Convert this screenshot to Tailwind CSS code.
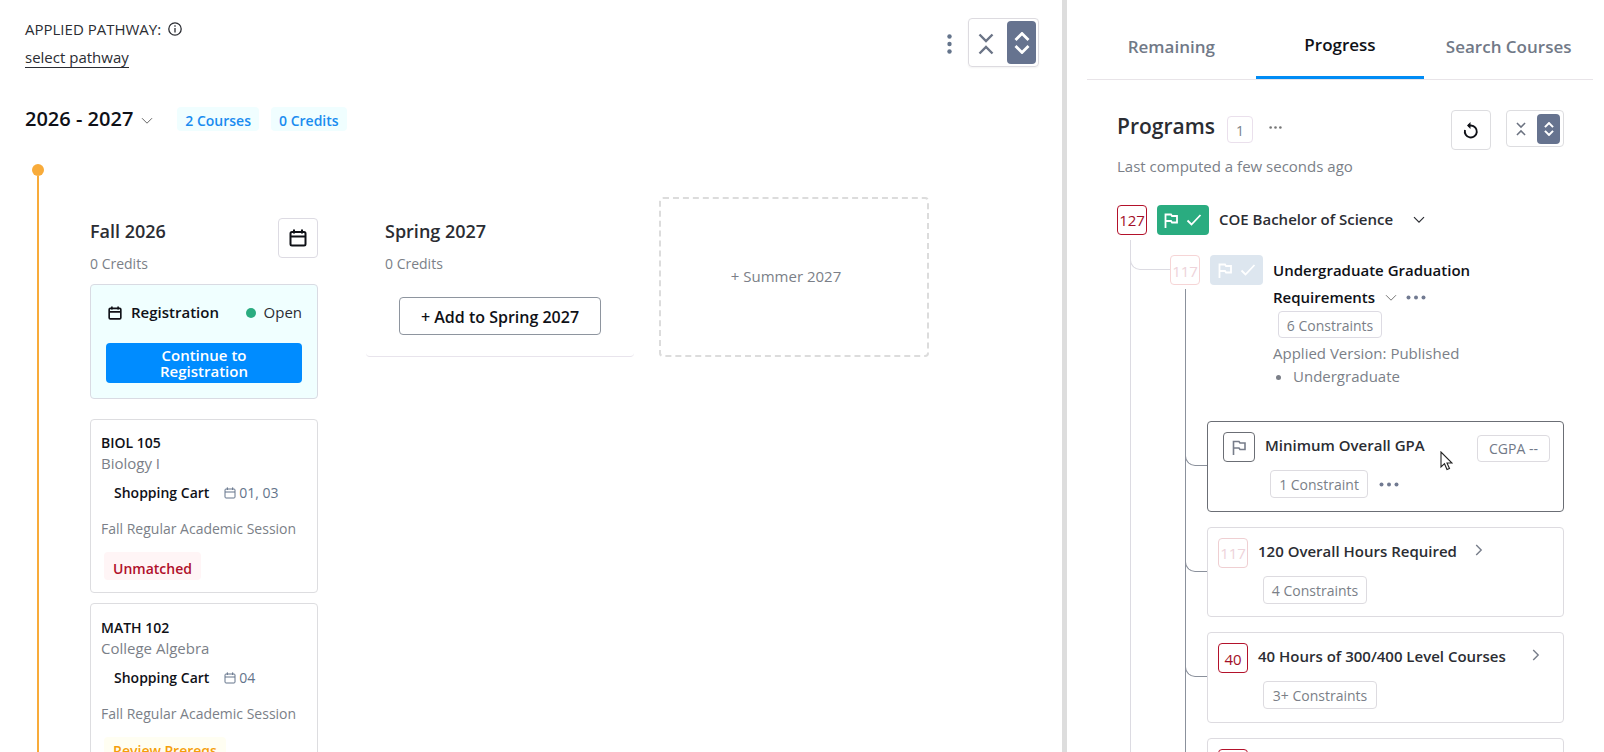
<!DOCTYPE html>
<html lang="en">
<head>
    <meta charset="UTF-8" />
    <meta name="viewport" content="width=device-width, initial-scale=1" />
    <title>Degree Planner</title>
    <script src="https://cdn.jsdelivr.net/npm/@tailwindcss/browser@4"></script>
</head>
<body class="bg-white text-[#2b2d33] text-[15px] font-['Segoe_UI','Open_Sans',sans-serif]">
<!-- shared icons -->
<svg class="hidden" aria-hidden="true">
    <symbol id="calendar" viewBox="0 0 18 18" fill="none" stroke="currentColor">
        <rect x="1.5" y="3" width="15" height="13.5" rx="1.5" />
        <path d="M1.5 7.5h15M5 0.5v4M13 0.5v4" />
    </symbol>
    <symbol id="chevron-down" viewBox="0 0 12 8" fill="none" stroke="currentColor">
        <path d="M1 1.2l5 5 5-5" />
    </symbol>
    <symbol id="chevron-right" viewBox="0 0 8 12" fill="none" stroke="currentColor">
        <path d="M1.2 1l5 5-5 5" />
    </symbol>
    <symbol id="collapse" viewBox="0 0 16 22" fill="none" stroke="currentColor">
        <path d="M1.5 1.5L8 8l6.5-6.5M1.5 20.5L8 14l6.5 6.5" />
    </symbol>
    <symbol id="expand" viewBox="0 0 16 22" fill="none" stroke="currentColor">
        <path d="M1.5 8L8 1.5 14.5 8M1.5 14L8 20.5l6.5-6.5" />
    </symbol>
    <symbol id="flag" viewBox="0 0 14 15" fill="none" stroke="currentColor">
        <path d="M1.5 15V1.5h5.5l1 1.5h5v6.5H8L7 8H1.5" />
    </symbol>
    <symbol id="check" viewBox="0 0 16 12" fill="none" stroke="currentColor">
        <path d="M1.5 6.5l4 4 9-9.5" />
    </symbol>
    <symbol id="dots" viewBox="0 0 20 5" fill="currentColor">
        <circle cx="2.5" cy="2.5" r="2" /><circle cx="10" cy="2.5" r="2" /><circle cx="17.5" cy="2.5" r="2" />
    </symbol>
</svg>

<div class="flex h-screen overflow-hidden">
    <!-- Planner -->
    <main class="flex-1 min-w-0 flex flex-col">
        <header class="flex justify-between items-start pl-[25px] pr-[23px] pt-[15px]">
            <div>
                <div class="flex items-center gap-[7px] h-7">
                    <span>APPLIED PATHWAY:</span>
                    <svg class="size-[14px]" viewBox="0 0 14 14" fill="none" stroke="currentColor" stroke-width="1.3"><circle cx="7" cy="7" r="6.2" /><path d="M7 6v4.5M7 3.2v1.5" /></svg>
                </div>
                <a href="#" class="inline-block h-[25px] leading-[28px] border-b border-[#2b2d33]">select pathway</a>
            </div>
            <div class="flex items-center gap-4 pt-[3px]">
                <button type="button" aria-label="More options" class="pt-[2px] text-[#64748b]">
                    <svg class="w-[5px] h-5" viewBox="0 0 5 20" fill="currentColor"><circle cx="2.5" cy="2.5" r="2.2" /><circle cx="2.5" cy="10" r="2.2" /><circle cx="2.5" cy="17.5" r="2.2" /></svg>
                </button>
                <div class="flex items-start justify-between w-[71px] h-[49px] pt-[2px] pl-[9px] pr-[2px] border border-[#dddbe0] rounded-sm shadow-xs">
                    <button type="button" aria-label="Collapse all" class="h-[45px] text-[#6b7486]"><svg class="w-4 h-[22px]" stroke-width="2.4"><use href="#collapse" /></svg></button>
                    <button type="button" aria-label="Expand all" class="flex items-center justify-center w-[29px] h-[43px] pt-px rounded-sm bg-[#66738f] text-white"><svg class="w-4 h-[22px]" stroke-width="2.8"><use href="#expand" /></svg></button>
                </div>
            </div>
        </header>

        <div class="flex items-center h-7 mt-9 pl-[25px]">
            <h2 class="text-[20px] font-semibold text-[#0f1117]">2026 - 2027</h2>
            <button type="button" aria-label="Toggle year" class="ml-2 mr-6 pt-1 text-[#666]"><svg class="w-3 h-2"><use href="#chevron-down" /></svg></button>
            <span class="h-6 leading-[27px] px-2 mr-3 rounded-sm bg-[#f0feff] text-[14px] font-semibold text-[#1a8cf0]">2 Courses</span>
            <span class="h-6 leading-[27px] px-2 rounded-sm bg-[#f0feff] text-[14px] font-semibold text-[#1a8cf0]">0 Credits</span>
        </div>

        <div class="flex flex-1 min-h-0 mt-[31px] pl-8">
            <div class="flex flex-col items-center w-3">
                <div class="size-3 shrink-0 rounded-full bg-[#f8ab3a]"></div>
                <div class="w-[2px] flex-1 bg-[#f8ab3a]"></div>
            </div>

            <div class="flex items-start pt-[33px] pl-[46px]">
                <!-- Fall -->
                <section class="w-[228px] pt-5 mr-12">
                    <div class="flex justify-between items-start mb-[10px]">
                        <div>
                            <h3 class="text-[18px] leading-[28px] font-semibold">Fall 2026</h3>
                            <p class="mt-[9px] text-[14px] leading-[20px] text-[#7b7f88]">0 Credits</p>
                        </div>
                        <button type="button" aria-label="Fall 2026 calendar" class="flex items-center justify-center size-10 mt-px border border-[#dddbe3] rounded-sm text-[#0f1117]"><svg class="size-[18px]" stroke-width="2"><use href="#calendar" /></svg></button>
                    </div>

                    <div class="px-[15px] pt-[18px] pb-[15px] border border-[#d9dbe3] rounded-sm bg-[#f0ffff]">
                        <div class="flex items-center h-5">
                            <svg class="size-[14px] ml-[2px] mr-[9px] text-[#0f1117]" stroke-width="2.1"><use href="#calendar" /></svg>
                            <span class="font-semibold text-[#0f1117]">Registration</span>
                            <span class="size-[10px] ml-auto mr-2 rounded-full bg-[#2aac80]"></span>
                            <span>Open</span>
                        </div>
                        <button type="button" class="w-full h-10 mt-5 px-10 rounded-sm bg-[#008cff] text-white leading-[16px] font-semibold">Continue to Registration</button>
                    </div>

                    <article class="mt-5 px-[10px] pt-[13px] pb-3 border border-[#dddde0] rounded-sm">
                        <h4 class="text-[14px] leading-[20px] font-semibold text-[#0f1117]">BIOL 105</h4>
                        <p class="leading-[20px] text-[#7b7f88]">Biology I</p>
                        <div class="flex items-center h-6 mt-2 pl-[13px]">
                            <span class="text-[14px] font-semibold text-[#0f1117]">Shopping Cart</span>
                            <svg class="size-3 ml-[15px] mr-[3px] text-[#64748b]" stroke-width="1.5"><use href="#calendar" /></svg>
                            <span class="text-[14px] text-[#64748b]">01, 03</span>
                        </div>
                        <p class="mt-[13px] leading-[22px] text-[14px] whitespace-nowrap text-[#7b7f88]">Fall Regular Academic Session</p>
                        <span class="inline-block align-top mt-3 ml-[3px] px-[9px] h-7 leading-[34px] rounded-sm bg-[#fff5f6] text-[14px] font-semibold text-[#b00f2a]">Unmatched</span>
                    </article>

                    <article class="mt-[10px] px-[10px] pt-[14px] pb-3 border border-[#dddde0] rounded-sm">
                        <h4 class="text-[14px] leading-[20px] font-semibold text-[#0f1117]">MATH 102</h4>
                        <p class="leading-[20px] text-[#7b7f88]">College Algebra</p>
                        <div class="flex items-center h-6 mt-2 pl-[13px]">
                            <span class="text-[14px] font-semibold text-[#0f1117]">Shopping Cart</span>
                            <svg class="size-3 ml-[15px] mr-[3px] text-[#64748b]" stroke-width="1.5"><use href="#calendar" /></svg>
                            <span class="text-[14px] text-[#64748b]">04</span>
                        </div>
                        <p class="mt-[13px] leading-[22px] text-[14px] whitespace-nowrap text-[#7b7f88]">Fall Regular Academic Session</p>
                        <span class="inline-block align-top mt-3 ml-[3px] px-[9px] h-7 leading-[28px] rounded-sm bg-[#fffef2] text-[14px] font-semibold text-[#f59e0b]">Review Prereqs</span>
                    </article>
                </section>

                <!-- Spring -->
                <section class="w-[268px] h-40 pt-5 px-[19px] mr-[25px] border-b border-[#e8e4ec] rounded-b-sm">
                    <h3 class="text-[18px] leading-[28px] font-semibold">Spring 2027</h3>
                    <p class="mt-[9px] text-[14px] leading-[20px] text-[#7b7f88]">0 Credits</p>
                    <button type="button" class="w-[202px] h-[38px] mt-[23px] ml-[14px] pt-[2px] border border-[#8e959f] rounded-sm text-[16px] font-semibold text-[#0f1117]">+ Add to Spring 2027</button>
                </section>

                <!-- Summer -->
                <button type="button" class="w-[270px] h-40 pr-4 border-2 border-dashed border-[#dcdcdc] rounded-sm text-[#7b7f88]">+ Summer 2027</button>
            </div>
        </div>
    </main>

    <!-- Progress panel -->
    <aside class="w-[542px] shrink-0 border-l-[5px] border-[#dddddd]">
        <nav class="grid grid-cols-3 h-20 ml-5 mr-[11px] border-b border-[#e8e4e8] text-[17px] font-semibold whitespace-nowrap text-[#717987]">
            <button type="button" class="pt-[14px]">Remaining</button>
            <button type="button" class="pt-[14px] border-b-3 border-[#008cf5] text-[#0f1117]">Progress</button>
            <button type="button" class="pt-[14px]">Search Courses</button>
        </nav>

        <div class="pl-[50px] pr-10 pt-[30px]">
            <div class="flex items-start">
                <h2 class="text-[21px] leading-[32px] font-semibold">Programs</h2>
                <span class="w-[26px] h-[27px] leading-[28px] mt-[6px] ml-3 border border-[#eae0ec] rounded-sm text-center text-[14px] text-[#7b7f88]">1</span>
                <button type="button" aria-label="Program options" class="mt-2 ml-4 text-[#777]"><svg class="w-[13px] h-[19px]" viewBox="0 0 20 5"><use href="#dots" /></svg></button>
                <button type="button" aria-label="Recompute" class="flex items-center justify-center size-10 ml-auto border border-[#dddde0] rounded-sm text-[#0f1117]">
                    <svg class="w-4 h-[17px]" viewBox="0 0 16 17" fill="none" stroke="currentColor" stroke-width="1.9"><path d="M2 8a6 6 0 1 0 6-4.500H5" /><path d="M7.5 0L4 3.5 7.5 7z" fill="currentColor" stroke="none" /></svg>
                </button>
                <div class="flex items-center justify-between w-[58px] h-[37px] ml-[15px] pl-[9px] pr-[3px] border border-[#dddde0] rounded-sm">
                    <button type="button" aria-label="Collapse programs" class="text-[#6b7280]"><svg class="w-[10px] h-[14px]" stroke-width="2.4"><use href="#collapse" /></svg></button>
                    <button type="button" aria-label="Expand programs" class="flex items-center justify-center w-[23px] h-[30px] rounded-sm bg-[#66738f] text-white"><svg class="w-[10px] h-[14px]" stroke-width="3.2"><use href="#expand" /></svg></button>
                </div>
            </div>
            <p class="mt-[5px] leading-[22px] text-[#7b7f88]">Last computed a few seconds ago</p>

            <div class="flex items-center mt-7 h-[30px]">
                <span class="size-[30px] leading-[29px] border border-[#b3122b] rounded-sm text-center text-[#a30f28]">127</span>
                <span class="flex items-center justify-center gap-2 w-[52px] h-[30px] ml-[10px] rounded-sm bg-[#2aac80] text-white">
                    <svg class="w-[14px] h-[15px]" stroke-width="1.8"><use href="#flag" /></svg>
                    <svg class="w-4 h-3" stroke-width="1.8"><use href="#check" /></svg>
                </span>
                <span class="ml-[10px] leading-[28px] pb-[2px] font-semibold">COE Bachelor of Science</span>
                <button type="button" aria-label="Toggle program" class="ml-5"><svg class="w-3 h-2" stroke-width="1.2"><use href="#chevron-down" /></svg></button>
            </div>

            <!-- level 1 -->
            <div class="mt-[5px] ml-[13px] pl-[39px] pt-[15px] border-l border-[#dcdbe2] relative">
                <span class="absolute -left-px top-0 w-10 h-[30px] border-l border-b border-[#dcdbe2] rounded-bl-[10px]"></span>
                <div class="flex items-start">
                    <span class="size-[30px] leading-[31px] border border-[#f6d5d6] rounded-sm text-center text-[#eed3da]">117</span>
                    <span class="flex items-center justify-center gap-2 w-[53px] h-[30px] ml-[10px] rounded-sm bg-[#dde6ef] text-white">
                        <svg class="w-[14px] h-[15px]" stroke-width="1.8"><use href="#flag" /></svg>
                        <svg class="w-4 h-3" stroke-width="1.8"><use href="#check" /></svg>
                    </span>
                    <div class="ml-[10px] pt-[2px] text-[#7b7f88]">
                        <div class="w-[220px] leading-[27px] font-semibold text-[#0f1117]">
                            Undergraduate Graduation<br />
                            <span class="flex items-center">Requirements
                                <button type="button" aria-label="Toggle requirements" class="ml-[10px] text-[#777]"><svg class="w-3 h-2"><use href="#chevron-down" /></svg></button>
                                <button type="button" aria-label="Requirement options" class="ml-[9px] text-[#717a91]"><svg class="w-5 h-[5px]"><use href="#dots" /></svg></button>
                            </span>
                        </div>
                        <span class="block w-[104px] h-[27px] leading-[27px] ml-[5px] border border-[#dddbe3] rounded-sm text-center text-[14px]">6 Constraints</span>
                        <p class="mt-1 leading-[23px]">Applied Version: Published</p>
                        <ul class="leading-[23px] list-disc pl-5">
                            <li>Undergraduate</li>
                        </ul>
                    </div>
                </div>
            </div>

            <!-- level 2 -->
            <div class="ml-[13px] -mt-[99px] border-l border-[#dcdbe2]">
                <div class="ml-[54px] border-l border-[#8b919c] pt-[132px] pl-[21px] pb-10 flex flex-col gap-[15px]">
                    <article class="relative h-[91px] pt-[10px] pl-[15px] pr-[13px] border border-[#6b6e75] rounded-sm">
                        <span class="absolute -left-[23px] top-[30px] w-[22px] h-[14px] border-l border-b border-[#8b919c] rounded-bl-[10px]"></span>
                        <div class="flex items-start">
                            <span class="flex items-center justify-center w-8 h-[30px] border border-[#6b6e75] rounded-sm text-[#777d8a]"><svg class="w-[14px] h-[15px]" stroke-width="1.6"><use href="#flag" /></svg></span>
                            <h4 class="ml-[10px] leading-[26px] font-semibold">Minimum Overall GPA</h4>
                            <span class="w-[73px] h-[27px] leading-[26px] mt-[3px] ml-auto border border-[#dddbe0] rounded-sm text-center text-[14px] text-[#717987]">CGPA --</span>
                        </div>
                        <div class="flex items-center mt-2 ml-[47px] gap-[11px]">
                            <span class="w-[98px] h-7 leading-[27px] border border-[#dddbe0] rounded-sm text-center text-[14px] text-[#7b7f88]">1 Constraint</span>
                            <button type="button" aria-label="Constraint options" class="text-[#717a91]"><svg class="w-5 h-[5px]"><use href="#dots" /></svg></button>
                        </div>
                        <!-- pointer -->
                        <svg class="absolute left-[232px] top-[29px] w-[13px] h-[20px]" viewBox="0 0 13 20" fill="white" stroke="#222" stroke-width="1.1"><path d="M1 1v15l3.5-3.3L7 18.5l2.5-1-2.5-5.5h5z" /></svg>
                    </article>

                    <article class="relative h-[90px] pt-[10px] px-[10px] border border-[#dddbe0] rounded-sm">
                        <span class="absolute -left-[23px] top-[30px] w-[22px] h-[14px] border-l border-b border-[#8b919c] rounded-bl-[10px]"></span>
                        <div class="flex items-start">
                            <span class="size-[30px] leading-[29px] border border-[#efcfd2] rounded-sm text-center text-[#eed3da]">117</span>
                            <h4 class="ml-[10px] leading-[26px] font-semibold">120 Overall Hours Required</h4>
                            <button type="button" aria-label="Expand requirement" class="mt-[6px] ml-[18px] text-[#777d8a]"><svg class="w-2 h-3" stroke-width="1.4"><use href="#chevron-right" /></svg></button>
                        </div>
                        <span class="block w-[104px] h-7 leading-[27px] mt-2 ml-[45px] border border-[#dddbe0] rounded-sm text-center text-[14px] text-[#7b7f88]">4 Constraints</span>
                    </article>

                    <article class="relative h-[91px] pt-[10px] px-[10px] border border-[#dddbe0] rounded-sm">
                        <span class="absolute -left-[23px] top-[30px] w-[22px] h-[14px] border-l border-b border-[#8b919c] rounded-bl-[10px]"></span>
                        <div class="flex items-start">
                            <span class="size-[30px] leading-[31px] border border-[#b3122b] rounded-sm text-center text-[#a30f28]">40</span>
                            <h4 class="ml-[10px] leading-[26px] font-semibold">40 Hours of 300/400 Level Courses</h4>
                            <button type="button" aria-label="Expand requirement" class="mt-[6px] ml-[26px] text-[#777d8a]"><svg class="w-2 h-3" stroke-width="1.4"><use href="#chevron-right" /></svg></button>
                        </div>
                        <span class="block w-[114px] h-7 leading-[27px] mt-2 ml-[45px] border border-[#dddbe0] rounded-sm text-center text-[14px] text-[#7b7f88]">3+ Constraints</span>
                    </article>

                    <article class="relative h-[91px] pt-[10px] px-[10px] border border-[#dddbe0] rounded-sm">
                        <span class="block size-[30px] border border-[#b3122b] rounded-sm"></span>
                    </article>
                </div>
            </div>
        </div>
    </aside>
</div>
</body>
</html>
